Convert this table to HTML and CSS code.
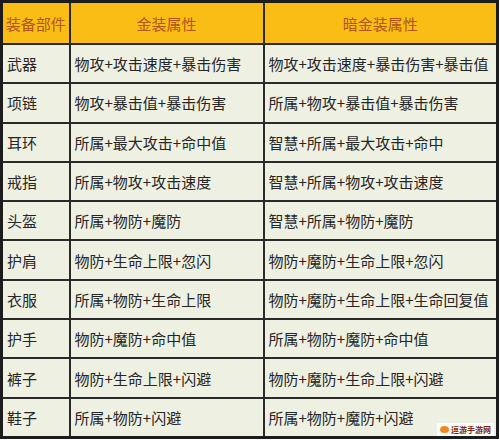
FILE: index.html
```html
<!DOCTYPE html>
<html lang="zh">
<head>
<meta charset="utf-8">
<link rel="stylesheet" href="styles.css">
</head>
<body>
<div class="wrap">
<table class="gear">
  <colgroup><col class="c1"><col class="c2"><col class="c3"></colgroup>
  <thead>
    <tr><th class="first">装备部件</th><th>金装属性</th><th>暗金装属性</th></tr>
  </thead>
  <tbody>
    <tr><td>武器</td><td>物攻+攻击速度+暴击伤害</td><td>物攻+攻击速度+暴击伤害+暴击值</td></tr>
    <tr><td>项链</td><td>物攻+暴击值+暴击伤害</td><td>所属+物攻+暴击值+暴击伤害</td></tr>
    <tr><td>耳环</td><td>所属+最大攻击+命中值</td><td>智慧+所属+最大攻击+命中</td></tr>
    <tr><td>戒指</td><td>所属+物攻+攻击速度</td><td>智慧+所属+物攻+攻击速度</td></tr>
    <tr><td>头盔</td><td>所属+物防+魔防</td><td>智慧+所属+物防+魔防</td></tr>
    <tr><td>护肩</td><td>物防+生命上限+忽闪</td><td>物防+魔防+生命上限+忽闪</td></tr>
    <tr><td>衣服</td><td>所属+物防+生命上限</td><td>物防+魔防+生命上限+生命回复值</td></tr>
    <tr><td>护手</td><td>物防+魔防+命中值</td><td>所属+物防+魔防+命中值</td></tr>
    <tr><td>裤子</td><td>物防+生命上限+闪避</td><td>物防+魔防+生命上限+闪避</td></tr>
    <tr><td>鞋子</td><td>所属+物防+闪避</td><td>所属+物防+魔防+闪避</td></tr>
  </tbody>
</table>
<div class="mark"><span class="dot"></span><span class="mtxt">逗游手游网</span></div>
</div>
</body>
</html>
```
FILE: styles.css
```css
html, body {
  margin: 0;
  padding: 0;
  background: #ffffff;
}
.wrap {
  position: relative;
  width: 500px;
  height: 440px;
}
.gear {
  border-collapse: collapse;
  width: 499px;
  table-layout: fixed;
  font-family: "Noto Sans CJK SC", "Noto Sans", sans-serif;
  font-size: 15px;
  color: #262626;
  background: #eef0e2;
  border: 3px solid #1c1c1c;
}
.c1 { width: 68px; }
.c2 { width: 194px; }
.c3 { width: auto; }
.gear th, .gear td {
  border: 2px solid #2a2a2a;
  padding: 0 0 0 4px;
  text-align: left;
  white-space: nowrap;
  overflow: hidden;
  vertical-align: middle;
}
.gear th {
  background: #f9bd16;
  color: #b0561c;
  font-weight: normal;
  text-align: center;
  height: 40px;
  padding: 0;
}
.gear td {
  height: 37.3px;
}
.mark {
  position: absolute;
  right: 6px;
  bottom: 4px;
  display: flex;
  align-items: center;
  gap: 2px;
  background: rgba(255,255,255,0.85);
  padding: 1px 3px;
}
.dot {
  width: 9px;
  height: 7px;
  border-radius: 50%;
  background: #f08a1c;
}
.mtxt {
  font-family: "Noto Sans CJK SC", sans-serif;
  font-size: 8px;
  color: #7a2a10;
  font-weight: bold;
}
```
